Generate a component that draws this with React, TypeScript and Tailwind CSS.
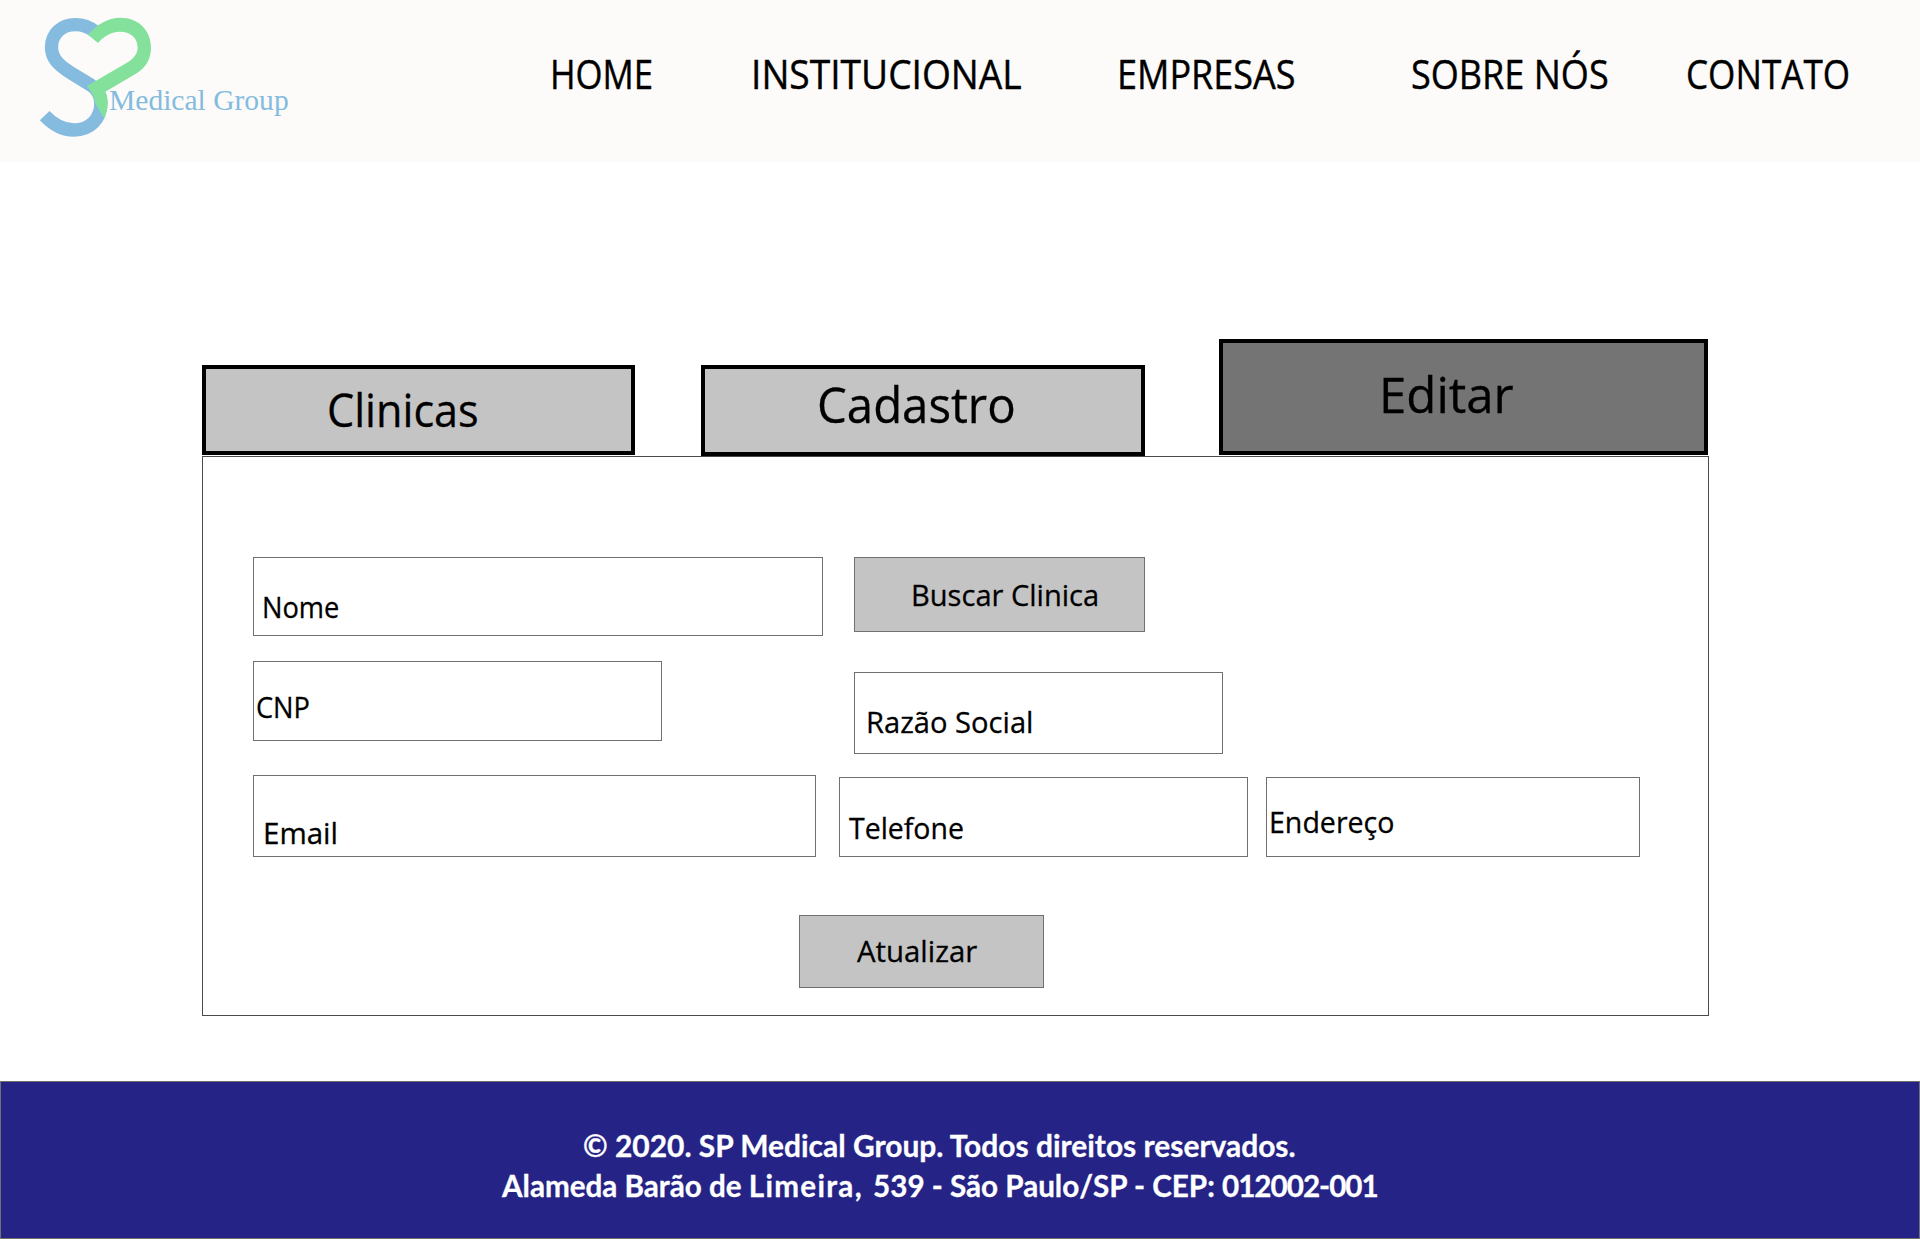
import type { ReactNode } from 'react';

function Logo() {
  return (
    <svg className="ml-5 h-[162px] w-[300px] shrink-0" viewBox="0 0 900 486" aria-label="SP Medical Group">
      <path
        d="M74 347C102 377 130 390 162 390C210 390 242.500 357 242.500 310C242.500 284 232 268 212 255L150 217C115 195 94.500 175 94.500 142C94.500 101 125 74 166 74C190 74 208 81 226 95"
        fill="none"
        stroke="#84bbdf"
        strokeWidth="40"
      />
      <path
        d="M204 104C232 73 262 53 302 53C355 53 393 90 393 143C393 178 377 202 350 220L256 275C262 288 263 298 263 310C263 327 259 342 252 355L226 310C223 290 214 273 200 258L232 240L318 190C340 177 353 162 353 143C353 113 331 95 300 95C275 95 252 108 234 129Z"
        fill="#83e19c"
      />
      <text x="267" y="331" fontSize="89" textLength="539" lengthAdjust="spacingAndGlyphs" fill="#84bbdf" className="font-['Liberation_Serif',serif] [-webkit-text-stroke:0]">
        Medical Group
      </text>
    </svg>
  );
}

function Label({ className, children }: { className: string; children: ReactNode }) {
  return <span className={`block origin-left whitespace-nowrap ${className}`}>{children}</span>;
}

function Field({ className, label, children }: { className: string; label: string; children: ReactNode }) {
  return (
    <div className={`shrink-0 border border-[#707070] text-[30px] leading-[30px] ${className}`}>
      <Label className={label}>{children}</Label>
    </div>
  );
}

export default function App() {
  return (
    <div className="flex h-[1239px] w-[1920px] flex-col overflow-hidden bg-white font-['Open_Sans',sans-serif] text-black [-webkit-text-stroke:0.3px_black]">
      <header className="flex h-[162px] shrink-0 bg-[#fcfbf9]">
        <Logo />
        <nav className="ml-[229px] flex pt-[54px] text-[40px] leading-[40px] [-webkit-text-stroke:0.4px_black]">
          <a className="w-[202px] pl-px"><Label className="scale-x-[0.868]">HOME</Label></a>
          <a className="w-[366px]"><Label className="scale-x-[0.929]">INSTITUCIONAL</Label></a>
          <a className="w-[294px]"><Label className="scale-x-[0.9]">EMPRESAS</Label></a>
          <a className="w-[274px]"><Label className="scale-x-[0.901]">SOBRE NÓS</Label></a>
          <a className="w-[200px] pl-px"><Label className="scale-x-[0.878]">CONTATO</Label></a>
        </nav>
      </header>

      <main className="mt-[177px] ml-[202px] w-[1507px] shrink-0">
        <div className="flex h-[117px] items-start">
          <div className="mt-[26px] h-[90px] w-[433px] border-4 border-black bg-[#c4c4c4] pt-[18px] pl-[121px] text-[45px] leading-[45px]">
            <Label className="scale-x-[0.96]">Clinicas</Label>
          </div>
          <div className="mt-[26px] ml-[66px] h-[91px] w-[444px] border-4 border-black bg-[#c4c4c4] pt-[10px] pl-[112px] text-[50px] leading-[50px]">
            <Label className="scale-x-[0.947]">Cadastro</Label>
          </div>
          <div className="ml-[74px] h-[116px] w-[489px] border-4 border-black bg-[#747474] pt-[26px] pl-[156px] text-[50px] leading-[50px]">
            <Label className="scale-x-[0.983]">Editar</Label>
          </div>
        </div>

        <section className="h-[560px] border border-[#4a4a4a] pt-[100px] pl-[50px]">
          <div className="flex h-[104px] items-start">
            <Field className="h-[79px] w-[570px] pt-[34px] pl-[8px]" label="scale-x-[0.907]">Nome</Field>
            <Field className="ml-[31px] h-[75px] w-[291px] bg-[#c4c4c4] pt-[22px] pl-[56px]" label="scale-x-[0.969]">Buscar Clinica</Field>
          </div>
          <div className="flex h-[114px] items-start">
            <Field className="h-[80px] w-[409px] pt-[30px] pl-[2px]" label="scale-x-[0.906]">CNP</Field>
            <Field className="mt-[11px] ml-[192px] h-[82px] w-[369px] pt-[34px] pl-[11px]" label="scale-x-[0.971]">Razão Social</Field>
          </div>
          <div className="flex h-[140px] items-start">
            <Field className="h-[82px] w-[563px] pt-[42px] pl-[9px]" label="scale-x-[0.983]">Email</Field>
            <Field className="mt-[2px] ml-[23px] h-[80px] w-[409px] pt-[35px] pl-[9px]" label="scale-x-[0.948]">Telefone</Field>
            <Field className="mt-[2px] ml-[18px] h-[80px] w-[374px] pt-[29px] pl-[2px]" label="scale-x-[0.952]">Endereço</Field>
          </div>
          <Field className="ml-[546px] h-[73px] w-[245px] bg-[#c4c4c4] pt-[20px] pl-[57px]" label="scale-x-[0.979]">Atualizar</Field>
        </section>
      </main>

      <footer className="mt-[65px] h-[158px] shrink-0 border border-[#707070] bg-[#252486] pt-[43px] font-['Lato',sans-serif] text-[30px] leading-[40px] font-bold text-white [-webkit-text-stroke:0.3px_white]">
        <Label className="ml-[582px] scale-x-[0.998]">© 2020. SP Medical Group. Todos direitos reservados.</Label>
        <Label className="ml-[501px] scale-x-[0.987]">
          Alameda Barão de <span className="mr-[3px] tracking-[1.3px]">Limeira,</span> 539 - São Paulo/SP - CEP:{' '}
          <span className="tracking-[-1px]">012002-001</span>
        </Label>
      </footer>
    </div>
  );
}
